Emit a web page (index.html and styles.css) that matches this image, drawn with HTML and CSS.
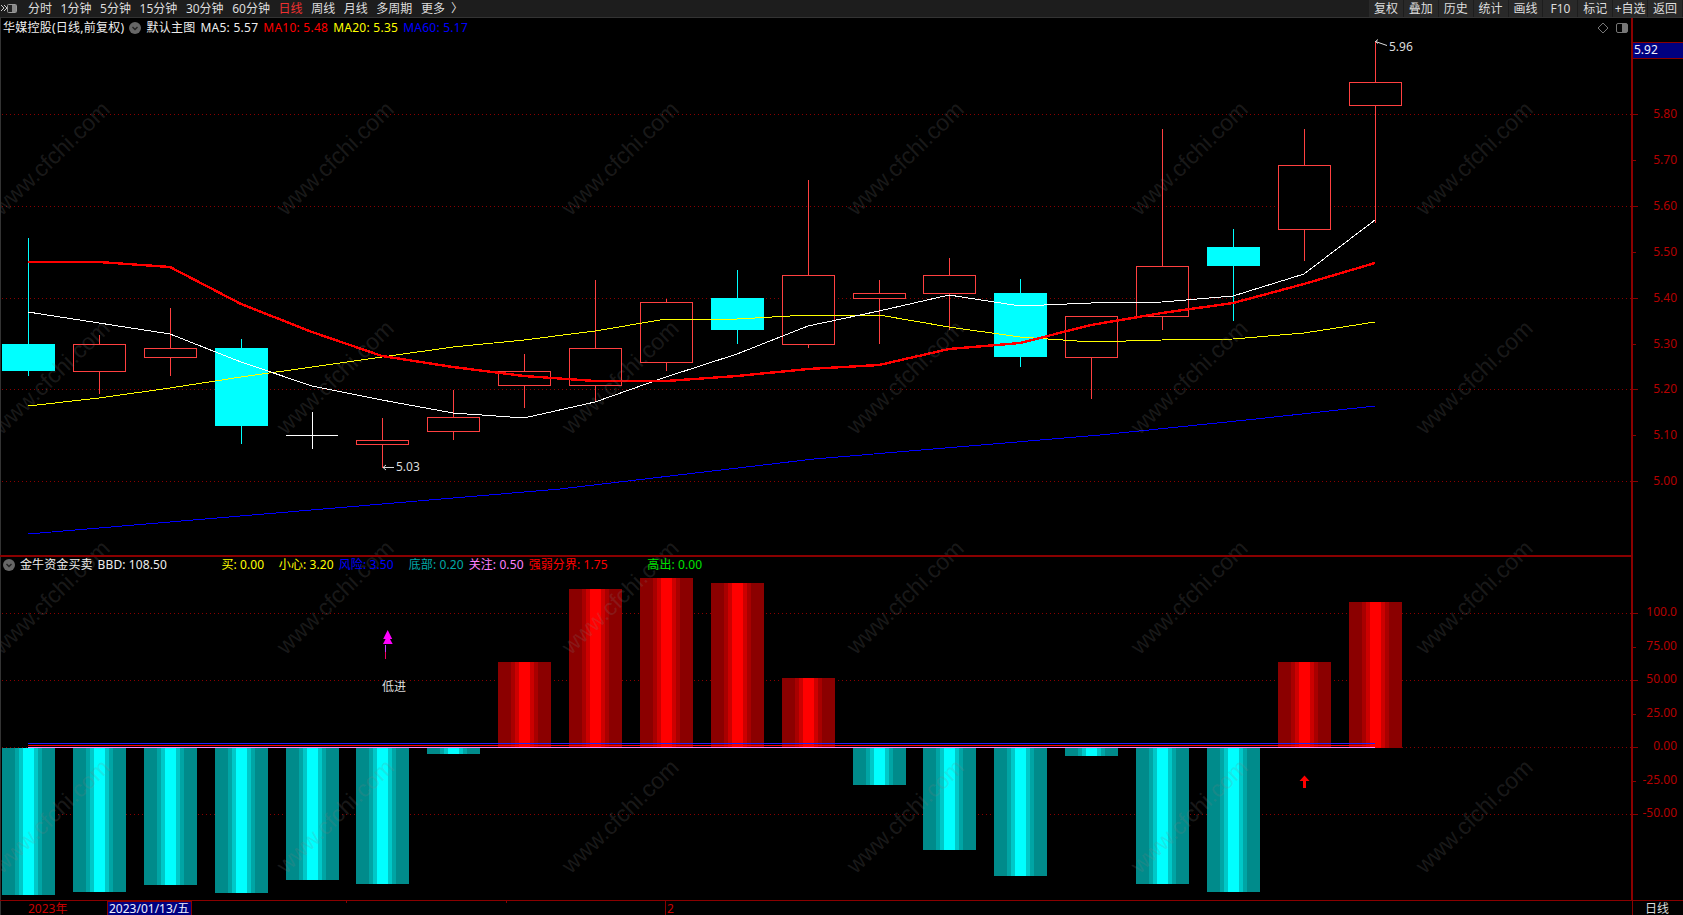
FILE: index.html
```html
<!DOCTYPE html>
<html lang="zh-CN">
<head>
  <meta charset="UTF-8">
  <title>华媒控股 日线</title>
  <link rel="stylesheet" href="styles.css">
</head>
<body>

  <!-- Period bar -->
  <header class="toolbar">
    <svg class="menu-icon" viewBox="0 0 17 17" width="17" height="17">
      <path class="menu-arrows" d="M1 5l3 3-3 3M4 5l3 3-3 3"/>
      <rect class="menu-box" x="7.5" y="4.5" width="9" height="8" rx="1"/>
      <rect class="menu-fill" x="12" y="5" width="4" height="7"/>
    </svg>
    <nav class="periods">
      <a>分时</a>
      <a>1分钟</a>
      <a>5分钟</a>
      <a>15分钟</a>
      <a>30分钟</a>
      <a>60分钟</a>
      <a class="active">日线</a>
      <a>周线</a>
      <a>月线</a>
      <a>多周期</a>
      <a class="more">更多<span class="more-arrow">〉</span></a>
    </nav>
    <div class="tools">
      <button>复权</button>
      <button>叠加</button>
      <button>历史</button>
      <button>统计</button>
      <button>画线</button>
      <button>F10</button>
      <button>标记</button>
      <button>+自选</button>
      <button>返回</button>
    </div>
  </header>

  <main class="stage">
    <svg class="plot" viewBox="0 18 1683 897" width="1683" height="897">
      <defs>
        <linearGradient id="bar-red">
          <stop offset="0.245" stop-color="#8b0000"/>
          <stop offset="0.245" stop-color="#a80000"/>
          <stop offset="0.32" stop-color="#a80000"/>
          <stop offset="0.32" stop-color="#cc0000"/>
          <stop offset="0.396" stop-color="#cc0000"/>
          <stop offset="0.396" stop-color="#ff0000"/>
          <stop offset="0.604" stop-color="#ff0000"/>
          <stop offset="0.604" stop-color="#cc0000"/>
          <stop offset="0.68" stop-color="#cc0000"/>
          <stop offset="0.68" stop-color="#a80000"/>
          <stop offset="0.755" stop-color="#a80000"/>
          <stop offset="0.755" stop-color="#8b0000"/>
        </linearGradient>
        <linearGradient id="bar-cyan">
          <stop offset="0.245" stop-color="#008b8b"/>
          <stop offset="0.245" stop-color="#00a5a5"/>
          <stop offset="0.32" stop-color="#00a5a5"/>
          <stop offset="0.32" stop-color="#00c8c8"/>
          <stop offset="0.396" stop-color="#00c8c8"/>
          <stop offset="0.396" stop-color="#00ffff"/>
          <stop offset="0.604" stop-color="#00ffff"/>
          <stop offset="0.604" stop-color="#00c8c8"/>
          <stop offset="0.68" stop-color="#00c8c8"/>
          <stop offset="0.68" stop-color="#00a5a5"/>
          <stop offset="0.755" stop-color="#00a5a5"/>
          <stop offset="0.755" stop-color="#008b8b"/>
        </linearGradient>
      </defs>

      <!-- Grid -->
      <path class="grid" d="M2 114.5H1631M2 206.5H1631M2 298.5H1631M2 389.5H1631M2 481.5H1631M2 613.5H1631M2 680.5H1631M2 747.5H1631M2 814.5H1631"/>

      <!-- BBD bars -->
      <g class="bars-cyan">
        <rect x="2" y="748" width="53" height="147"/>
        <rect x="73" y="748" width="53" height="144"/>
        <rect x="144" y="748" width="53" height="137"/>
        <rect x="215" y="748" width="53" height="145"/>
        <rect x="286" y="748" width="53" height="132"/>
        <rect x="356" y="748" width="53" height="136"/>
        <rect x="427" y="748" width="53" height="6"/>
        <rect x="853" y="748" width="53" height="37"/>
        <rect x="923" y="748" width="53" height="102"/>
        <rect x="994" y="748" width="53" height="128"/>
        <rect x="1065" y="748" width="53" height="8"/>
        <rect x="1136" y="748" width="53" height="136"/>
        <rect x="1207" y="748" width="53" height="144"/>
      </g>
      <g class="bars-red">
        <rect x="498" y="662" width="53" height="86"/>
        <rect x="569" y="589" width="53" height="159"/>
        <rect x="640" y="578" width="53" height="170"/>
        <rect x="711" y="583" width="53" height="165"/>
        <rect x="782" y="678" width="53" height="70"/>
        <rect x="1278" y="662" width="53" height="86"/>
        <rect x="1349" y="602" width="53" height="146"/>
      </g>

      <!-- Candles -->
      <g class="wick-up">
        <path d="M99.5 335V344M99.5 372V394"/>
        <path d="M170.5 308V348M170.5 358V376"/>
        <path d="M382.5 418V440M382.5 445V468"/>
        <path d="M453.5 390V417M453.5 432V440"/>
        <path d="M524.5 354V371M524.5 386V408"/>
        <path d="M595.5 280V348M595.5 386V402"/>
        <path d="M666.5 299V302M666.5 363V371"/>
        <path d="M808.5 180V275M808.5 345V348"/>
        <path d="M879.5 280V293M879.5 299V344"/>
        <path d="M949.5 258V275M949.5 294V330"/>
        <path d="M1091.5 358V399"/>
        <path d="M1162.5 129V266M1162.5 317V330"/>
        <path d="M1304.5 129V165M1304.5 230V261"/>
        <path d="M1375.5 41V82M1375.5 106V223"/>
      </g>
      <g class="wick-down">
        <path d="M28.5 238V376"/>
        <path d="M241.5 339V444"/>
        <path d="M737.5 270V344"/>
        <path d="M1020.5 279V367"/>
        <path d="M1233.5 229V321"/>
      </g>
      <g class="body-up">
        <rect x="73.5" y="344.5" width="52" height="27"/>
        <rect x="144.5" y="348.5" width="52" height="9"/>
        <rect x="356.5" y="440.5" width="52" height="4"/>
        <rect x="427.5" y="417.5" width="52" height="14"/>
        <rect x="498.5" y="371.5" width="52" height="14"/>
        <rect x="569.5" y="348.5" width="52" height="37"/>
        <rect x="640.5" y="302.5" width="52" height="60"/>
        <rect x="782.5" y="275.5" width="52" height="69"/>
        <rect x="853.5" y="293.5" width="52" height="5"/>
        <rect x="923.5" y="275.5" width="52" height="18"/>
        <rect x="1065.5" y="316.5" width="52" height="41"/>
        <rect x="1136.5" y="266.5" width="52" height="50"/>
        <rect x="1278.5" y="165.5" width="52" height="64"/>
        <rect x="1349.5" y="82.5" width="52" height="23"/>
      </g>
      <g class="body-down">
        <rect x="2" y="344" width="53" height="27"/>
        <rect x="215" y="348" width="53" height="78"/>
        <rect x="711" y="298" width="53" height="32"/>
        <rect x="994" y="293" width="53" height="64"/>
        <rect x="1207" y="247" width="53" height="19"/>
      </g>
      <path class="doji" d="M286 435.5H338M312.5 412V449"/>

      <!-- Moving averages -->
      <polyline class="ma ma60" points="28,534 453,498 560,489 814,459 1100,435 1256,419 1375,406"/>
      <polyline class="ma ma20" points="28,406 99,398 170,388 241,377 312,367 382,357 453,347 524,340 595,331 666,319 737,319 808,315 879,315 949,327 1020,337 1091,342 1162,340 1233,339 1304,333 1375,322"/>
      <polyline class="ma ma5" points="28,312 99,323 170,334 241,362 312,386 382,400 453,413 524,418 595,402 666,377 737,354 808,326 879,311 949,295 1020,306 1091,303 1162,302 1233,296 1304,274 1375,220"/>
      <polyline class="ma ma10" points="28,262 99,262 170,267 241,304 312,332 382,356 453,367 524,376 595,381 666,381 737,376 808,369 879,365 949,349 1020,343 1091,325 1162,313 1233,303 1304,284 1375,263"/>

      <!-- Zero lines -->
      <path class="zero-blue" d="M28 743.5H1375"/>
      <path class="zero-red" d="M28 745.5H1375"/>
      <path class="zero-pink" d="M28 747.5H1375"/>

      <!-- High and low marks -->
      <path class="mark-line" d="M1375.5 41.5L1387 45.5M1378 39.5L1375.5 41.5L1378 43.5"/>
      <text class="mark-text" x="1389" y="51">5.96</text>
      <path class="mark-line" d="M383 467.5H394M386 465L383 467.5L386 470"/>
      <text class="mark-text" x="396" y="471">5.03</text>

      <!-- Signals -->
      <polygon class="signal" points="387.7,630 383.2,639 392.2,639"/>
      <polygon class="signal" points="387.7,635 383,644 392.7,644"/>
      <path class="signal-stem" d="M385.5 645V652"/>
      <path class="signal-stem-low" d="M385.5 652V659"/>
      <text class="signal-text" x="382" y="691">低进</text>
      <polygon class="signal-red" points="1304.5,775.5 1299.5,781 1303,781 1303,788 1306,788 1306,781 1309.5,781"/>

      <!-- Watermark -->
      <g class="watermark" transform="translate(-2 0)">
        <text x="53" y="166" transform="rotate(-44 53 158)">www.cfchi.com</text>
        <text x="337" y="166" transform="rotate(-44 337 158)">www.cfchi.com</text>
        <text x="622" y="166" transform="rotate(-44 622 158)">www.cfchi.com</text>
        <text x="907" y="166" transform="rotate(-44 907 158)">www.cfchi.com</text>
        <text x="1191" y="166" transform="rotate(-44 1191 158)">www.cfchi.com</text>
        <text x="1476" y="166" transform="rotate(-44 1476 158)">www.cfchi.com</text>
        <text x="53" y="385" transform="rotate(-44 53 377)">www.cfchi.com</text>
        <text x="337" y="385" transform="rotate(-44 337 377)">www.cfchi.com</text>
        <text x="622" y="385" transform="rotate(-44 622 377)">www.cfchi.com</text>
        <text x="907" y="385" transform="rotate(-44 907 377)">www.cfchi.com</text>
        <text x="1191" y="385" transform="rotate(-44 1191 377)">www.cfchi.com</text>
        <text x="1476" y="385" transform="rotate(-44 1476 377)">www.cfchi.com</text>
        <text x="53" y="605" transform="rotate(-44 53 597)">www.cfchi.com</text>
        <text x="337" y="605" transform="rotate(-44 337 597)">www.cfchi.com</text>
        <text x="622" y="605" transform="rotate(-44 622 597)">www.cfchi.com</text>
        <text x="907" y="605" transform="rotate(-44 907 597)">www.cfchi.com</text>
        <text x="1191" y="605" transform="rotate(-44 1191 597)">www.cfchi.com</text>
        <text x="1476" y="605" transform="rotate(-44 1476 597)">www.cfchi.com</text>
        <text x="53" y="824" transform="rotate(-44 53 816)">www.cfchi.com</text>
        <text x="337" y="824" transform="rotate(-44 337 816)">www.cfchi.com</text>
        <text x="622" y="824" transform="rotate(-44 622 816)">www.cfchi.com</text>
        <text x="907" y="824" transform="rotate(-44 907 816)">www.cfchi.com</text>
        <text x="1191" y="824" transform="rotate(-44 1191 816)">www.cfchi.com</text>
        <text x="1476" y="824" transform="rotate(-44 1476 816)">www.cfchi.com</text>
      </g>

      <!-- Axes -->
      <rect class="edge" x="0" y="18" width="1" height="897"/>
      <rect class="axis" x="0" y="555" width="1633" height="2"/>
      <rect class="axis" x="0" y="900" width="1683" height="1"/>
      <rect class="axis" x="1631" y="18" width="2" height="882"/>
      <rect class="axis" x="1632" y="900" width="1" height="15"/>
      <path class="tick" d="M1633 114.5H1638M1633 160.5H1636M1633 206.5H1638M1633 252.5H1636M1633 298.5H1638M1633 344.5H1636M1633 389.5H1638M1633 435.5H1636M1633 481.5H1638"/>
      <path class="tick" d="M1633 613.5H1638M1633 647.5H1636M1633 680.5H1638M1633 714.5H1636M1633 747.5H1638M1633 781.5H1636M1633 814.5H1638"/>
      <path class="tick" d="M346.5 901V903M506.5 901V903M665.5 901V915"/>

      <g class="axis-labels">
        <text x="1677" y="118">5.80</text>
        <text x="1677" y="164">5.70</text>
        <text x="1677" y="210">5.60</text>
        <text x="1677" y="256">5.50</text>
        <text x="1677" y="302">5.40</text>
        <text x="1677" y="348">5.30</text>
        <text x="1677" y="393">5.20</text>
        <text x="1677" y="439">5.10</text>
        <text x="1677" y="485">5.00</text>
        <text x="1677" y="616">100.0</text>
        <text x="1677" y="650">75.00</text>
        <text x="1677" y="683">50.00</text>
        <text x="1677" y="717">25.00</text>
        <text x="1677" y="750">0.00</text>
        <text x="1677" y="784">-25.00</text>
        <text x="1677" y="817">-50.00</text>
      </g>

      <!-- Price and date cursors -->
      <rect class="cursor" x="1632.5" y="42.5" width="51" height="16"/>
      <text class="cursor-text" x="1634" y="54">5.92</text>
      <text class="year-text" x="28" y="913">2023年</text>
      <rect class="cursor" x="107.5" y="901.5" width="84" height="14"/>
      <text class="cursor-text" x="109" y="913">2023/01/13/五</text>
      <text class="year-text" x="667" y="913">2</text>
      <text class="period-text" x="1645" y="913">日线</text>
    </svg>

    <!-- Main chart legend -->
    <div class="legend legend-main">
      <span class="stock-name">华媒控股(日线,前复权)</span>
      <svg class="chevron" viewBox="0 0 12 12" width="12" height="12">
        <circle cx="6" cy="6" r="6"/>
        <path d="M3.5 5l2.5 2.5L8.5 5"/>
      </svg>
      <span>默认主图</span>
      <span>MA5: 5.57</span>
      <span class="red">MA10: 5.48</span>
      <span class="yellow">MA20: 5.35</span>
      <span class="blue">MA60: 5.17</span>
    </div>

    <div class="chart-icons">
      <svg viewBox="0 0 31 12" width="31" height="12">
        <path class="icon-line" d="M6 1l5 5-5 5-5-5z"/>
        <rect class="icon-line" x="19.5" y="1.5" width="11" height="9" rx="1.5"/>
        <rect class="icon-fill" x="25" y="2" width="5" height="8"/>
      </svg>
    </div>

    <!-- Indicator legend -->
    <div class="legend legend-sub">
      <svg class="chevron" viewBox="0 0 12 12" width="12" height="12">
        <circle cx="6" cy="6" r="6"/>
        <path d="M3.5 5l2.5 2.5L8.5 5"/>
      </svg>
      <span>金牛资金买卖</span>
      <span>BBD: 108.50</span>
      <span class="yellow gap-buy">买: 0.00</span>
      <span class="yellow gap-care">小心: 3.20</span>
      <span class="blue">风险: 3.50</span>
      <span class="teal gap-base">底部: 0.20</span>
      <span class="pink">关注: 0.50</span>
      <span class="red">强弱分界: 1.75</span>
      <span class="green gap-high">高出: 0.00</span>
    </div>
  </main>

</body>
</html>
```

FILE: styles.css
```css
/* Global Styles */
* {
  margin: 0;
  padding: 0;
  box-sizing: border-box;
}

body {
  width: 1683px;
  height: 915px;
  overflow: hidden;
  background-color: #000;
  color: #e6e6e6;
  font-family: "Noto Sans", "Noto Sans CJK SC", sans-serif;
  font-size: 12px;
}

/* Period bar */
.toolbar {
  display: flex;
  align-items: center;
  justify-content: space-between;
  height: 18px;
  padding-right: 1px;
  background-color: #1d1d1d;
  border-bottom: 1px solid #333;
}

.menu-icon {
  flex: none;
  margin-right: 11px;
}

.menu-arrows {
  fill: none;
  stroke: #ccc;
}

.menu-box {
  fill: #222;
  stroke: #999;
}

.menu-fill {
  fill: #888;
}

.periods {
  display: flex;
  flex: 1;
  gap: 8.6px;
  line-height: 17px;
  color: #ddd;
}

.periods .active {
  color: #f03030;
}

.more-arrow {
  display: inline-block;
  margin-left: 6px;
  width: 6px;
}

.tools {
  display: flex;
  gap: 1px;
  width: 313px;
  height: 17px;
}

.tools button {
  flex: 1;
  border: none;
  background-color: #292929;
  color: #ddd;
  font: inherit;
  line-height: 17px;
  white-space: nowrap;
}

/* Chart */
.stage {
  position: relative;
  height: 897px;
}

.plot {
  position: absolute;
  top: 0;
  left: 0;
  display: block;
}

.grid {
  fill: none;
  stroke: #8a0000;
  stroke-dasharray: 1 3;
  shape-rendering: crispEdges;
}

.bars-red rect {
  fill: url(#bar-red);
}

.bars-cyan rect {
  fill: url(#bar-cyan);
}

.wick-up path {
  stroke: #ff4040;
  shape-rendering: crispEdges;
}

.wick-down path {
  stroke: #00ffff;
  shape-rendering: crispEdges;
}

.body-up rect {
  fill: #000;
  stroke: #ff4040;
  shape-rendering: crispEdges;
}

.body-down rect {
  fill: #00ffff;
}

.doji {
  fill: none;
  stroke: #fff;
  shape-rendering: crispEdges;
}

.ma {
  fill: none;
  stroke-width: 1;
  shape-rendering: crispEdges;
}

.ma5 {
  stroke: #fff;
}

.ma10 {
  stroke: #f00;
  stroke-width: 2.4;
}

.ma20 {
  stroke: #ff0;
}

.ma60 {
  stroke: #00f;
}

.zero-blue {
  stroke: #2020ff;
  shape-rendering: crispEdges;
}

.zero-red {
  stroke: #f00;
  shape-rendering: crispEdges;
}

.zero-pink {
  stroke: #ff80ff;
  shape-rendering: crispEdges;
}

.mark-line {
  fill: none;
  stroke: #ddd;
}

.mark-text,
.signal-text,
.period-text {
  fill: #dcdcdc;
}

.signal {
  fill: #f0f;
}

.signal-stem {
  stroke: #c040ff;
  shape-rendering: crispEdges;
}

.signal-stem-low {
  stroke: #f00060;
  shape-rendering: crispEdges;
}

.signal-red {
  fill: #f00;
}

.watermark text {
  fill: #808080;
  fill-opacity: 0.2;
  font-family: "Liberation Sans", sans-serif;
  font-size: 23px;
  text-anchor: middle;
}

.edge {
  fill: #333;
}

.axis,
.tick {
  fill: #8a0000;
  stroke: none;
}

.tick {
  fill: none;
  stroke: #8a0000;
  shape-rendering: crispEdges;
}

.axis-labels text {
  fill: #b40000;
  text-anchor: end;
}

.cursor {
  fill: #000080;
  stroke: #8a0000;
  shape-rendering: crispEdges;
}

.cursor-text {
  fill: #f0f0ff;
}

.year-text {
  fill: #c80000;
}

/* Legends over the chart */
.legend {
  position: absolute;
  left: 3px;
  display: flex;
  align-items: center;
  height: 14px;
  line-height: 14px;
  white-space: nowrap;
  color: #eee;
}

.legend-main {
  top: 3px;
  gap: 5px;
  letter-spacing: 0.25px;
}

.legend-sub {
  top: 540px;
  gap: 5px;
  letter-spacing: 0.1px;
}

.chevron circle {
  fill: #666;
}

.chevron path {
  fill: none;
  stroke: #222;
  stroke-width: 1.4;
}

.red {
  color: #f00;
}

.yellow {
  color: #ff0;
}

.blue {
  color: #00f;
}

.teal {
  color: #00a8a8;
}

.pink {
  color: #ff80ff;
}

.green {
  color: #00e000;
}

.gap-buy {
  margin-left: 49.5px;
}

.gap-care {
  margin-left: 9.5px;
}

.gap-base {
  margin-left: 10px;
}

.gap-high {
  margin-left: 34.5px;
}

.chart-icons {
  position: absolute;
  top: 4px;
  left: 1597px;
  line-height: 0;
}

.icon-line {
  fill: none;
  stroke: #777;
}

.icon-fill {
  fill: #777;
}
```
